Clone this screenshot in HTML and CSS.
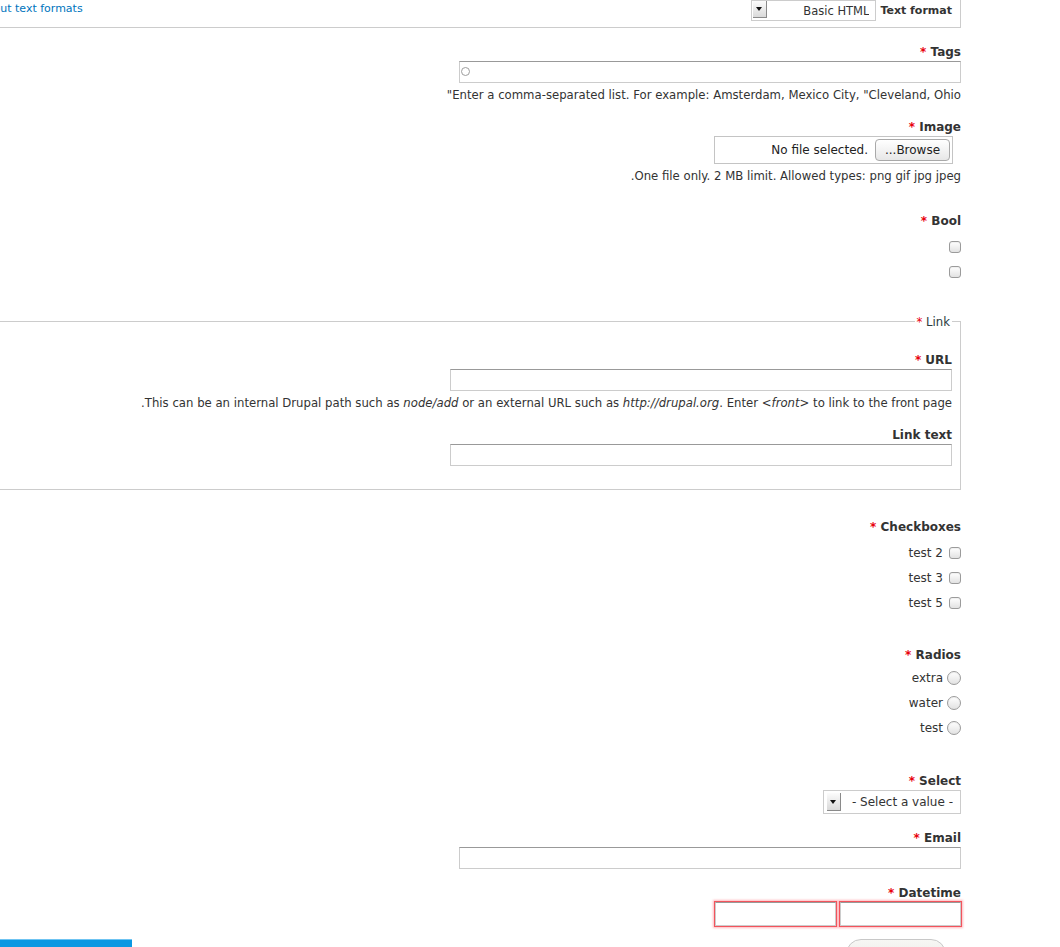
FILE: index.html
```html
<!DOCTYPE html>
<html lang="en" dir="rtl">
<head>
<meta charset="utf-8">
<title>Create Article</title>
<link rel="stylesheet" href="styles.css">
</head>
<body>
<form class="node-form" action="#">

  <div class="filter-wrapper">
    <div class="filter-format">
      <label class="filter-label" for="edit-format">Text format</label>
      <span class="select-wrap">
        <select id="edit-format" class="select select--format">
          <option>Basic HTML</option>
        </select>
        <span class="select-arrow select-arrow--small"></span>
      </span>
    </div>
    <a class="filter-help" href="#">About text formats</a>
  </div>

  <div class="form-item">
    <label class="form-label" for="edit-tags">Tags <span class="form-required">*</span></label>
    <span class="autocomplete">
      <input type="text" id="edit-tags" class="form-text">
    </span>
    <div class="description">Enter a comma-separated list. For example: Amsterdam, Mexico City, "Cleveland, Ohio"</div>
  </div>

  <div class="form-item">
    <label class="form-label" for="edit-image">Image <span class="form-required">*</span></label>
    <div class="file-widget">
      <button type="button" id="edit-image" class="file-button">Browse...</button>
      <span class="file-status" dir="ltr">No file selected.</span>
    </div>
    <div class="description">One file only. 2 MB limit. Allowed types: png gif jpg jpeg.</div>
  </div>

  <div class="form-item field-bool">
    <div class="form-label">Bool <span class="form-required">*</span></div>
    <div class="options">
      <div class="option"><input type="checkbox" class="form-checkbox" aria-label="On"></div>
      <div class="option"><input type="checkbox" class="form-checkbox" aria-label="Off"></div>
    </div>
  </div>

  <fieldset class="fieldset field-link">
    <legend class="fieldset-legend">Link <span class="form-required">*</span></legend>
    <div class="form-item">
      <label class="form-label" for="edit-url">URL <span class="form-required">*</span></label>
      <input type="text" id="edit-url" class="form-text">
      <div class="description">This can be an internal Drupal path such as <em>node/add</em> or an external URL such as <em>http://drupal.org</em>. Enter <em>&lt;front&gt;</em> to link to the front page.</div>
    </div>
    <div class="form-item">
      <label class="form-label" for="edit-link-title">Link text</label>
      <input type="text" id="edit-link-title" class="form-text">
    </div>
  </fieldset>

  <div class="form-item field-checkboxes">
    <div class="form-label">Checkboxes <span class="form-required">*</span></div>
    <div class="options">
      <div class="option"><input type="checkbox" id="edit-cb-2" class="form-checkbox"><label for="edit-cb-2">test 2</label></div>
      <div class="option"><input type="checkbox" id="edit-cb-3" class="form-checkbox"><label for="edit-cb-3">test 3</label></div>
      <div class="option"><input type="checkbox" id="edit-cb-5" class="form-checkbox"><label for="edit-cb-5">test 5</label></div>
    </div>
  </div>

  <div class="form-item field-radios">
    <div class="form-label">Radios <span class="form-required">*</span></div>
    <div class="options options--radios">
      <div class="option option--radio"><input type="radio" name="radios" id="edit-r-extra" class="form-radio"><label for="edit-r-extra">extra</label></div>
      <div class="option option--radio"><input type="radio" name="radios" id="edit-r-water" class="form-radio"><label for="edit-r-water">water</label></div>
      <div class="option option--radio"><input type="radio" name="radios" id="edit-r-test" class="form-radio"><label for="edit-r-test">test</label></div>
    </div>
  </div>

  <div class="form-item field-select">
    <label class="form-label" for="edit-select">Select <span class="form-required">*</span></label>
    <span class="select-wrap">
      <select id="edit-select" class="select select--field">
        <option>- Select a value -</option>
      </select>
      <span class="select-arrow"></span>
    </span>
  </div>

  <div class="form-item">
    <label class="form-label" for="edit-email">Email <span class="form-required">*</span></label>
    <input type="text" id="edit-email" class="form-text">
  </div>

  <div class="form-item">
    <label class="form-label" for="edit-date">Datetime <span class="form-required">*</span></label>
    <div class="datetime">
      <input type="text" id="edit-date" class="form-text form-text--error" aria-label="Date">
      <input type="text" class="form-text form-text--error" aria-label="Time">
    </div>
  </div>

  <div class="form-actions">
    <button type="button" class="button">Preview</button>
    <button type="submit" class="button button--primary">Save and publish</button>
  </div>

</form>
</body>
</html>
```

FILE: styles.css
```css
html {
  overflow: hidden;
}

body {
  margin: 0;
  background: #fff;
  color: #333;
  font-family: "DejaVu Sans", "Liberation Sans", sans-serif;
  font-size: 11.7px;
}

.node-form {
  margin: -10px 99px 0 -30px;
}

/* ---- Text format box ---- */
.filter-wrapper {
  display: flex;
  justify-content: space-between;
  align-items: flex-start;
  border: 1px solid #ccc;
  padding: 9px 8px 6px 8px;
}

.filter-format {
  display: flex;
  align-items: center;
  gap: 4px;
}

.filter-label {
  font-size: 11px;
  font-weight: bold;
  line-height: 16px;
}

.filter-help {
  padding-top: 1px;
  color: #0074bd;
  font-size: 11px;
  line-height: 16px;
  text-decoration: none;
}

/* ---- Selects ---- */
.select-wrap {
  position: relative;
  display: inline-block;
  vertical-align: top;
}

.select {
  -webkit-appearance: none;
  appearance: none;
  display: block;
  box-sizing: border-box;
  margin: 0;
  border: 1px solid #ccc;
  border-radius: 0;
  background: #fff;
  color: #333;
  font-family: inherit;
}

.select--format {
  width: 125px;
  height: 21px;
  padding: 0 6px 0 20px;
  font-size: 11.5px;
}

.select--field {
  width: 138px;
  height: 24px;
  padding: 0 7px 0 22px;
  font-size: 12px;
}

.select-arrow {
  position: absolute;
  left: 4px;
  top: 3px;
  box-sizing: border-box;
  width: 14px;
  height: 18px;
  border-right: 1px solid #8a8a8a;
  border-bottom: 1px solid #8a8a8a;
  background: linear-gradient(#fcfcfc, #d9d9d9);
  pointer-events: none;
}

.select-arrow--small {
  left: 2px;
  top: 1px;
  width: 14px;
  height: 17px;
}

.select-arrow::after {
  content: "";
  position: absolute;
  left: 3px;
  top: 7px;
  border-left: 3.5px solid transparent;
  border-right: 3.5px solid transparent;
  border-top: 4px solid #111;
}

.select-arrow--small::after {
  top: 6px;
}

/* ---- Form items ---- */
.form-item {
  margin-top: 14px;
}

.form-label {
  display: block;
  margin-bottom: 1px;
  padding-top: 2px;
  font-size: 12px;
  font-weight: bold;
  line-height: 16px;
}

.form-required {
  color: #e8000b;
}

.form-text {
  display: block;
  box-sizing: border-box;
  width: 502px;
  height: 22px;
  margin: 0;
  padding: 2px 4px;
  border: 1px solid #ccc;
  border-top-color: #999;
  border-radius: 0;
  background: #fff;
  color: #333;
  font-family: inherit;
  font-size: 12px;
}

.description {
  margin-top: 4px;
  font-size: 11.7px;
  line-height: 16px;
}

/* Autocomplete throbber drawn inside the tags field */
.autocomplete {
  position: relative;
  display: block;
  width: 502px;
}

.autocomplete::after {
  content: "";
  position: absolute;
  left: 2px;
  top: 6px;
  width: 7px;
  height: 7px;
  border: 1.5px solid #9d9d9d;
  border-radius: 50%;
}

/* ---- File field ---- */
.file-widget {
  display: flex;
  align-items: center;
  gap: 7px;
  box-sizing: border-box;
  width: 239px;
  height: 28px;
  margin-right: 8px;
  padding: 0 2px;
  border: 1px solid #c4c4c4;
}

.file-button {
  box-sizing: border-box;
  width: 75px;
  height: 22px;
  margin: 0;
  padding: 0;
  border: 1px solid #a9a9a9;
  border-radius: 4px;
  background: linear-gradient(#fff, #e7e7e7);
  color: #222;
  font-family: inherit;
  font-size: 12px;
}

.file-status {
  font-size: 12px;
  color: #222;
}

/* ---- Checkboxes and radios ---- */
.options {
  margin-top: 5px;
}

.options--radios {
  margin-top: 2px;
}

.option {
  display: flex;
  align-items: center;
  gap: 6px;
  height: 25px;
  font-size: 12px;
}

.option--radio {
  gap: 4px;
}

.form-checkbox,
.form-radio {
  -webkit-appearance: none;
  appearance: none;
  box-sizing: border-box;
  flex: none;
  margin: 0;
  border: 1px solid #9b9b9b;
  background: linear-gradient(#fff, #e2e2e2);
  box-shadow: inset 0 1px 1px rgba(0, 0, 0, 0.06);
}

.form-checkbox {
  width: 12px;
  height: 12px;
  border-radius: 3px;
}

.form-radio {
  width: 14px;
  height: 14px;
  border-radius: 50%;
}

/* ---- Field spacing ---- */
.field-bool {
  margin-top: 27px;
}

.field-checkboxes {
  margin-top: 27px;
}

.field-radios {
  margin-top: 30px;
}

.field-select {
  margin-top: 31px;
}

/* ---- Link fieldset ---- */
.fieldset {
  min-width: 0;
  margin: 28px 0 0;
  padding: 6px 8px 23px;
  border: 1px solid #ccc;
}

.fieldset-legend {
  padding: 2px 2px 0 2px;
  color: #2c3b40;
  font-size: 11.7px;
  line-height: 16px;
}

/* ---- Datetime ---- */
.datetime {
  display: flex;
  gap: 4px;
}

.datetime .form-text {
  width: 121px;
  height: 24px;
}

.form-text--error {
  box-shadow: 0 0 0 1px #f2545c, 0 0 2px 2px rgba(255, 100, 110, 0.45);
}

/* ---- Actions ---- */
.form-actions {
  display: flex;
  justify-content: space-between;
  align-items: flex-start;
  margin-top: 13px;
}

.button {
  box-sizing: border-box;
  width: 100px;
  height: 30px;
  margin: 0 15px 0 0;
  border: 1px solid #c8c8c8;
  border-radius: 15px;
  background: linear-gradient(#f7f7f4, #e8e8e3);
  color: #333;
  font-family: inherit;
  font-size: 12px;
}

.button--primary {
  width: 162px;
  margin-right: 0;
  border: 0;
  border-top: 1px solid #6fc4f2;
  border-left: 1px solid #0b6db0;
  border-radius: 0;
  background: #0b98e2;
  color: #fff;
}
```
